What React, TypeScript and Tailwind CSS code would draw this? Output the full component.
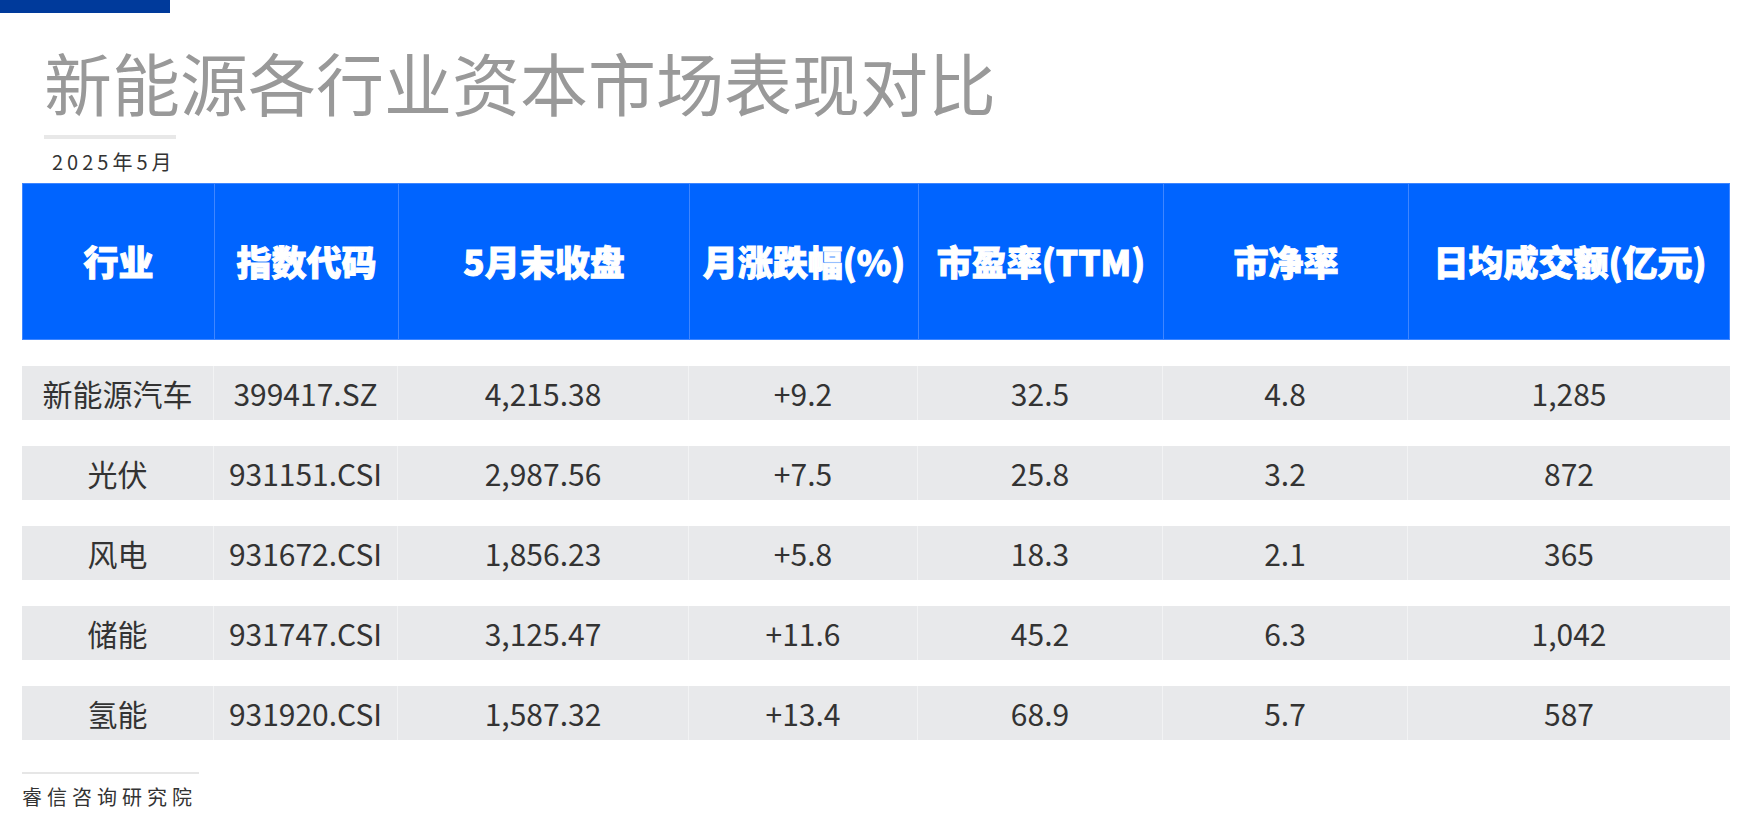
const columns = ['行业', '指数代码', '5月末收盘', '月涨跌幅(%)', '市盈率(TTM)', '市净率', '日均成交额(亿元)']

const rows = [
  ['新能源汽车', '399417.SZ', '4,215.38', '+9.2', '32.5', '4.8', '1,285'],
  ['光伏', '931151.CSI', '2,987.56', '+7.5', '25.8', '3.2', '872'],
  ['风电', '931672.CSI', '1,856.23', '+5.8', '18.3', '2.1', '365'],
  ['储能', '931747.CSI', '3,125.47', '+11.6', '45.2', '6.3', '1,042'],
  ['氢能', '931920.CSI', '1,587.32', '+13.4', '68.9', '5.7', '587'],
]

const grid = 'grid grid-cols-[192px_184px_291px_229px_245px_245px_322px]'

export default function App() {
  return (
    <div className="w-[1750px] h-[819px] overflow-hidden bg-white font-['Noto_Sans_CJK_SC',sans-serif]">
      {/* top accent */}
      <div className="w-[170px] h-[13px] bg-[#003a9b]" />

      <div className="pl-[44px] pt-[35px]">
        <h1 className="text-[68px] leading-none font-normal text-[#999999] whitespace-nowrap">
          新能源各行业资本市场表现对比
        </h1>
        <div className="mt-[19px] w-[132px] h-[4px] bg-[#e8e8e8]" />
        <div className="mt-[13px] pl-[8px] text-[20px] leading-none tracking-[4px] text-[#333333]">
          2025年5月
        </div>
      </div>

      {/* table */}
      <div className="mx-[22px] mt-[11px] w-[1708px]">
        <div className={`${grid} h-[157px] bg-[#0064ff] divide-x divide-[#3f86ff] border border-[#3f86ff]`}>
          {columns.map((c) => (
            <div
              key={c}
              className="flex items-center justify-center text-[35px] font-black text-white whitespace-nowrap [-webkit-text-stroke:1px_white]"
            >
              {c}
            </div>
          ))}
        </div>

        {rows.map((r) => (
          <div key={r[0]} className={`${grid} mt-[26px] h-[54px] bg-[#e8e9eb] divide-x divide-[#f2f3f4]`}>
            {r.map((v, i) => (
              <div key={i} className="flex items-center justify-center text-[30px] text-[#333333] whitespace-nowrap">
                {v}
              </div>
            ))}
          </div>
        ))}
      </div>

      {/* footer */}
      <div className="pl-[22px] mt-[32px]">
        <div className="w-[177px] h-[2px] bg-[#e6e6e6]" />
        <div className="mt-[13px] text-[20px] leading-none tracking-[5px] text-[#333333]">睿信咨询研究院</div>
      </div>
    </div>
  )
}
